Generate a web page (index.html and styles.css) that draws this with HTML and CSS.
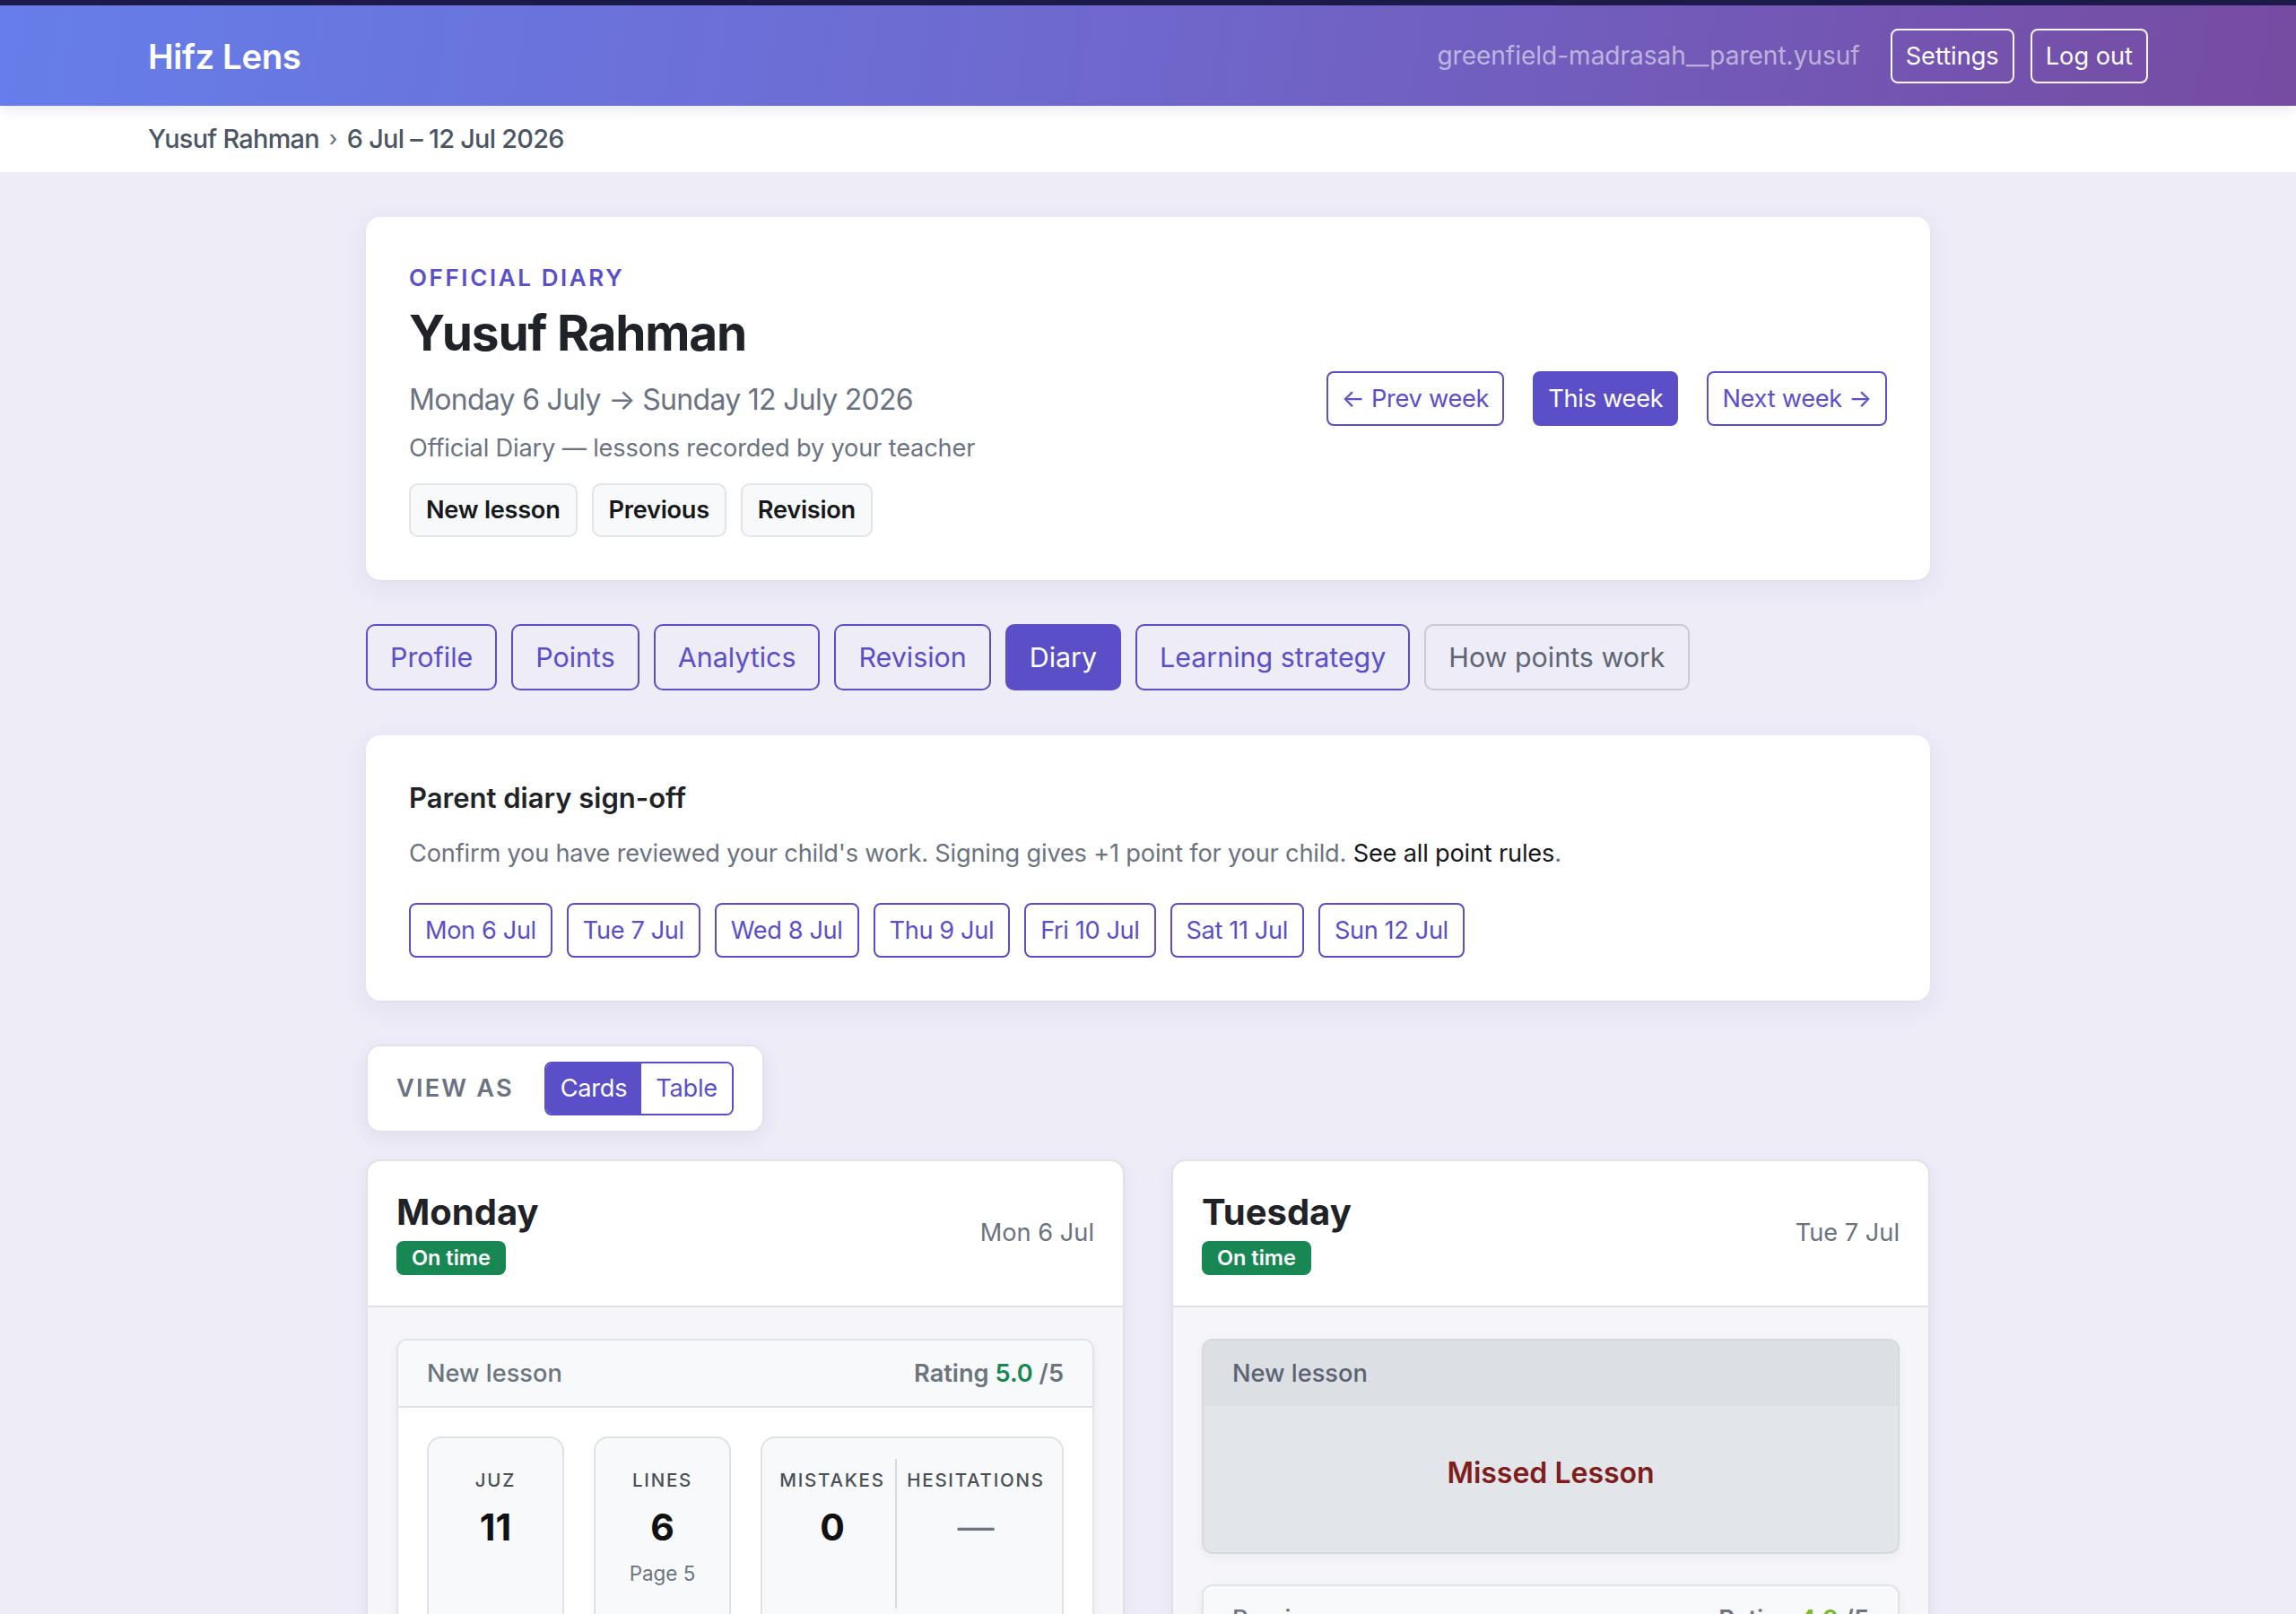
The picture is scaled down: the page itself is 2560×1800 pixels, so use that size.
FILE: index.html
```html
<!DOCTYPE html>
<html lang="en">
<head>
<meta charset="utf-8">
<title>Hifz Lens — Diary</title>
<link rel="stylesheet" href="styles.css">
</head>
<body>
<div class="topline"></div>
<header class="appbar">
  <div class="brand">Hifz Lens</div>
  <div class="account">
    <span class="username">greenfield-madrasah__parent.yusuf</span>
    <a class="ghost-btn" href="#">Settings</a>
    <a class="ghost-btn" href="#">Log out</a>
  </div>
</header>
<nav class="crumbs">
  <span>Yusuf Rahman</span><span class="crumb-sep">›</span><span>6 Jul – 12 Jul 2026</span>
</nav>

<main class="page">
  <section class="card hero">
    <div class="hero-text">
      <div class="eyebrow">OFFICIAL DIARY</div>
      <h1 class="hero-title">Yusuf Rahman</h1>
      <div class="hero-range">Monday 6 July → Sunday 12 July 2026</div>
      <div class="hero-sub">Official Diary — lessons recorded by your teacher</div>
      <div class="chip-row">
        <a class="chip" href="#">New lesson</a>
        <a class="chip" href="#">Previous</a>
        <a class="chip" href="#">Revision</a>
      </div>
    </div>
    <div class="week-nav">
      <a class="btn-outline" href="#">← Prev week</a>
      <a class="btn-solid" href="#">This week</a>
      <a class="btn-outline" href="#">Next week →</a>
    </div>
  </section>

  <nav class="tabs">
    <a class="tab" href="#">Profile</a>
    <a class="tab" href="#">Points</a>
    <a class="tab" href="#">Analytics</a>
    <a class="tab" href="#">Revision</a>
    <a class="tab tab-active" href="#">Diary</a>
    <a class="tab" href="#">Learning strategy</a>
    <a class="tab tab-muted" href="#">How points work</a>
  </nav>

  <section class="card signoff">
    <h2 class="signoff-title">Parent diary sign-off</h2>
    <p class="signoff-desc">Confirm you have reviewed your child's work. Signing gives +1 point for your child. <a class="rules-link" href="#">See all point rules</a>.</p>
    <div class="day-buttons">
      <a class="btn-day" href="#">Mon 6 Jul</a>
      <a class="btn-day" href="#">Tue 7 Jul</a>
      <a class="btn-day" href="#">Wed 8 Jul</a>
      <a class="btn-day" href="#">Thu 9 Jul</a>
      <a class="btn-day" href="#">Fri 10 Jul</a>
      <a class="btn-day" href="#">Sat 11 Jul</a>
      <a class="btn-day" href="#">Sun 12 Jul</a>
    </div>
  </section>

  <div class="viewas">
    <span class="viewas-label">VIEW AS</span>
    <div class="toggle">
      <a class="toggle-item toggle-on" href="#">Cards</a>
      <a class="toggle-item" href="#">Table</a>
    </div>
  </div>

  <div class="days">
    <article class="day-card">
      <div class="day-head">
        <div>
          <div class="day-name">Monday</div>
          <span class="badge-ok">On time</span>
        </div>
        <div class="day-date">Mon 6 Jul</div>
      </div>
      <div class="day-body">
        <div class="lesson">
          <div class="lesson-head">
            <span>New lesson</span>
            <span class="rating">Rating <b class="rate-good">5.0</b> /5</span>
          </div>
          <div class="lesson-stats">
            <div class="stat">
              <div class="stat-label">JUZ</div>
              <div class="stat-value">11</div>
            </div>
            <div class="stat">
              <div class="stat-label">LINES</div>
              <div class="stat-value">6</div>
              <div class="stat-note">Page 5</div>
            </div>
            <div class="stat stat-split">
              <div class="split-col">
                <div class="stat-label">MISTAKES</div>
                <div class="stat-value">0</div>
              </div>
              <div class="split-col">
                <div class="stat-label">HESITATIONS</div>
                <div class="stat-value stat-empty">—</div>
              </div>
            </div>
          </div>
        </div>
      </div>
    </article>

    <article class="day-card">
      <div class="day-head">
        <div>
          <div class="day-name">Tuesday</div>
          <span class="badge-ok">On time</span>
        </div>
        <div class="day-date">Tue 7 Jul</div>
      </div>
      <div class="day-body">
        <div class="lesson lesson-missed">
          <div class="lesson-head">
            <span>New lesson</span>
          </div>
          <div class="missed-body">Missed Lesson</div>
        </div>
        <div class="lesson">
          <div class="lesson-head">
            <span>Previous</span>
            <span class="rating">Rating <b class="rate-fair">4.0</b> /5</span>
          </div>
          <div class="lesson-stats">
            <div class="stat">
              <div class="stat-label">JUZ</div>
              <div class="stat-value">10</div>
            </div>
            <div class="stat">
              <div class="stat-label">PAGES</div>
              <div class="stat-value">2</div>
            </div>
            <div class="stat stat-split">
              <div class="split-col">
                <div class="stat-label">MISTAKES</div>
                <div class="stat-value">1</div>
              </div>
              <div class="split-col">
                <div class="stat-label">HESITATIONS</div>
                <div class="stat-value stat-empty">—</div>
              </div>
            </div>
          </div>
        </div>
      </div>
    </article>
  </div>
</main>
</body>
</html>
```
FILE: styles.css
```css
* { box-sizing: border-box; }

html, body {
  margin: 0;
  padding: 0;
}

body {
  font-family: Inter, "Noto Sans", "Liberation Sans", sans-serif;
  background: #eeecf7;
  color: #212529;
  font-size: 27.2px;
  line-height: 1.5;
}

a { text-decoration: none; color: inherit; }

/* top app bar */
.topline {
  height: 6px;
  background: #1d1b4a;
}

.appbar {
  height: 112px;
  padding: 0 165px;
  display: flex;
  align-items: center;
  justify-content: space-between;
  background: linear-gradient(100deg, #667eea 0%, #6f67cc 50%, #764ba2 100%);
  box-shadow: 0 4px 14px rgba(40, 30, 90, 0.10);
  position: relative;
  z-index: 1;
}

.brand {
  color: #fff;
  font-size: 38.4px;
  font-weight: 600;
  letter-spacing: -0.01em;
  line-height: 48px;
  padding-top: 2px;
}

.account {
  display: flex;
  align-items: center;
  gap: 18px;
}

.username {
  color: rgba(255, 255, 255, 0.55);
  font-size: 28px;
  margin-right: 16px;
}

.ghost-btn {
  color: #fff;
  border: 2px solid rgba(255, 255, 255, 0.95);
  border-radius: 8px;
  padding: 8px 15px;
  font-size: 27.2px;
  line-height: 41px;
}

/* breadcrumb strip */
.crumbs {
  height: 74px;
  background: #fff;
  padding: 0 165px;
  display: flex;
  align-items: center;
  color: #4b5563;
  font-size: 28.8px;
  font-weight: 500;
  letter-spacing: -0.024em;
}

.crumb-sep {
  margin: 0 11px;
  font-size: 24px;
  color: #6b7280;
}

/* page column */
.page {
  width: 1744px;
  margin: 50px auto 0;
}

.card {
  background: #fff;
  border-radius: 16px;
  box-shadow: 0 8px 30px rgba(76, 66, 160, 0.08), 0 1px 3px rgba(76, 66, 160, 0.05);
}

/* hero */
.hero {
  padding: 48px;
  display: flex;
  align-items: center;
  justify-content: space-between;
}

.eyebrow {
  color: #5b4fc8;
  font-size: 26px;
  font-weight: 600;
  letter-spacing: 0.1em;
  line-height: 40px;
}

.hero-title {
  margin: 8px 0 0;
  font-size: 55px;
  font-weight: 700;
  line-height: 67px;
  color: #1f2328;
  letter-spacing: -0.022em;
}

.hero-range {
  margin-top: 17px;
  font-size: 32px;
  line-height: 48px;
  color: #6b7280;
  letter-spacing: -0.022em;
}

.hero-sub {
  margin-top: 10px;
  font-size: 27.2px;
  line-height: 40px;
  color: #6b7280;
  letter-spacing: -0.006em;
}

.chip-row {
  margin-top: 19px;
  display: flex;
  gap: 16px;
}

.chip {
  background: #f8f9fa;
  border: 2px solid #e2e4e8;
  border-radius: 10px;
  padding: 8px 17px;
  line-height: 40px;
  font-weight: 600;
  color: #16181b;
  letter-spacing: -0.01em;
}

.week-nav {
  display: flex;
  gap: 32px;
}

.btn-outline,
.btn-solid {
  border: 2px solid #5b4fc8;
  border-radius: 8px;
  padding: 8px 15px;
  line-height: 41px;
  font-size: 27.2px;
  letter-spacing: -0.01em;
}

.btn-outline {
  color: #5b4fc8;
  background: #fff;
}

.btn-solid {
  color: #fff;
  background: #5b4fc8;
}

/* tab strip */
.tabs {
  display: flex;
  gap: 16px;
  margin: 49px 0 50px;
}

.tab {
  border: 2px solid #5b4fc8;
  border-radius: 10px;
  padding: 12px 25px;
  line-height: 46px;
  font-size: 30.4px;
  color: #5b4fc8;
}

.tab-active {
  background: #5b4fc8;
  color: #fff;
}

.tab-muted {
  border-color: #c8cbd4;
  color: #5f6672;
}

/* parent sign-off */
.signoff {
  padding: 50px 48px 48px;
}

.signoff-title {
  margin: 0;
  font-size: 31px;
  font-weight: 600;
  line-height: 40px;
  color: #1f2328;
}

.signoff-desc {
  margin: 22px 0 0;
  line-height: 40px;
  color: #6b7280;
  letter-spacing: -0.007em;
}

.rules-link {
  color: #16181b;
}

.day-buttons {
  margin-top: 35px;
  display: flex;
  gap: 16px;
}

.btn-day {
  border: 2px solid #5b4fc8;
  border-radius: 8px;
  padding: 8px 16px;
  line-height: 41px;
  color: #5b4fc8;
  background: #fff;
  letter-spacing: -0.014em;
}

/* view switch */
.viewas {
  margin-top: 49px;
  display: inline-flex;
  align-items: center;
  gap: 34px;
  background: #fff;
  border: 2px solid #e2e3ea;
  border-radius: 16px;
  padding: 17px 32px;
  box-shadow: 0 6px 20px rgba(76, 66, 160, 0.08);
}

.viewas-label {
  color: #6b7280;
  font-weight: 600;
  letter-spacing: 0.08em;
}

.toggle {
  display: flex;
  border: 2px solid #5b4fc8;
  border-radius: 8px;
  overflow: hidden;
}

.toggle-item {
  padding: 8px 16px;
  line-height: 40px;
  color: #5b4fc8;
  background: #fff;
  letter-spacing: -0.01em;
}

.toggle-on {
  background: #5b4fc8;
  color: #fff;
}

/* day cards */
.days {
  margin-top: 30px;
  display: grid;
  grid-template-columns: 1fr 1fr;
  gap: 52px;
  align-items: start;
}

.day-card {
  background: #fff;
  border: 2px solid #e0e2e8;
  border-radius: 16px;
  overflow: hidden;
  box-shadow: 0 6px 20px rgba(76, 66, 160, 0.06);
}

.day-head {
  display: flex;
  justify-content: space-between;
  align-items: center;
  padding: 33px 32px 33px;
  border-bottom: 2px solid #dfe2e7;
}

.day-name {
  font-size: 40px;
  font-weight: 700;
  line-height: 48px;
  color: #1f2328;
}

.badge-ok {
  display: inline-block;
  margin-top: 8px;
  background: #198754;
  color: #fff;
  font-size: 23.5px;
  font-weight: 600;
  line-height: 28px;
  padding: 5px 17px;
  border-radius: 8px;
}

.day-date {
  color: #6b7280;
}

.day-body {
  background: #f5f5fa;
  padding: 35px 32px;
  display: flex;
  flex-direction: column;
  gap: 34px;
}

.lesson {
  background: #fff;
  border: 2px solid #e1e4e8;
  border-radius: 12px;
  overflow: hidden;
  box-shadow: 0 4px 12px rgba(30, 30, 60, 0.05);
}

.lesson-head {
  display: flex;
  justify-content: space-between;
  align-items: center;
  background: #f8f9fa;
  border-bottom: 2px solid #dee2e6;
  padding: 16px 32px;
  line-height: 41px;
  font-weight: 500;
  color: #6c757d;
}

.rating {
  font-weight: 600;
}

.rating b {
  font-weight: 600;
}

.rate-good { color: #198754; }
.rate-fair { color: #7cb82f; }

.lesson-stats {
  display: grid;
  grid-template-columns: 153px 153px 1fr;
  gap: 33px;
  padding: 32px;
}

.stat {
  background: #f8f9fa;
  border: 2px solid #dee2e6;
  border-radius: 16px;
  padding: 31px 8px 56px;
  text-align: center;
  min-height: 250px;
}

.stat-label {
  font-size: 20.5px;
  font-weight: 500;
  letter-spacing: 0.085em;
  color: #495057;
  line-height: 31px;
}

.stat-value {
  margin-top: 14px;
  font-size: 41px;
  font-weight: 700;
  line-height: 46px;
  color: #111;
}

.stat-empty {
  color: #6c757d;
  font-weight: 400;
}

.stat-note {
  margin-top: 12px;
  font-size: 22.4px;
  color: #6c757d;
  line-height: 34px;
}

.stat-split {
  display: flex;
  padding: 23px 8px 56px;
}

.split-col {
  flex: 1 1 auto;
  padding-top: 8px;
}

.split-col + .split-col {
  border-left: 2px solid #d7dade;
  min-height: 160px;
}

/* missed lesson */
.lesson-missed {
  background: #e2e5e9;
  border-color: #d6d9de;
}

.lesson-missed .lesson-head {
  background: #dcdfe3;
  border-bottom: 0;
  color: #5b6372;
}

.missed-body {
  height: 163px;
  padding-bottom: 12px;
  display: flex;
  align-items: center;
  justify-content: center;
  font-size: 32px;
  font-weight: 600;
  color: #7f1d1d;
}
```
